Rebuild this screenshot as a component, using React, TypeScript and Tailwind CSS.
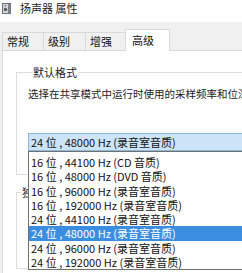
import React from "react";

const tabs = [
  { name: "常规", cls: "w-[42px] border-l border-r pl-[4px]" },
  { name: "级别", cls: "w-[42px] border-r pl-[4px]" },
  { name: "增强", cls: "w-[39px] pl-[4px]" },
];

const formats = [
  "16 位 , 44100 Hz (CD 音质)",
  "16 位 , 48000 Hz (DVD 音质)",
  "16 位 , 96000 Hz (录音室音质)",
  "16 位 , 192000 Hz (录音室音质)",
  "24 位 , 44100 Hz (录音室音质)",
  "24 位 , 48000 Hz (录音室音质)",
  "24 位 , 96000 Hz (录音室音质)",
  "24 位 , 192000 Hz (录音室音质)",
];

const selected = "24 位 , 48000 Hz (录音室音质)";

const SpeakerIcon = () => (
  <svg width="10" height="11" viewBox="0 0 10 11">
    <rect x="0.5" y="0.5" width="8" height="10" fill="#d3d6da" stroke="#6b7078" />
    <rect x="6" y="1" width="2.5" height="9" fill="#80858d" />
    <circle cx="3.5" cy="6.5" r="1.8" fill="#5d6168" />
    <circle cx="3.5" cy="2.8" r="0.8" fill="#5d6168" />
  </svg>
);

export default function App() {
  return (
    <div className="w-[242px] h-[273px] overflow-hidden bg-[#f0f0f0] flex flex-col font-['Noto_Sans_CJK_SC',sans-serif] text-[11px] text-[#111]">
      {/* title bar */}
      <div className="h-[22px] bg-white flex items-start pl-[2px] pt-[3px]">
        <SpeakerIcon />
        <span className="ml-[8px] -mt-[2px] leading-[14px] text-[#222]">扬声器 属性</span>
      </div>

      {/* tabs */}
      <div className="h-[28px] flex items-end pl-[2px]">
        {tabs.map((t) => (
          <div
            key={t.name}
            className={`h-[18px] border-t border-[#d9d9d9] leading-[17px] ${t.cls}`}
          >
            {t.name}
          </div>
        ))}
        <div className="relative z-10 -mb-px w-[45px] h-[22px] bg-white border-l border-r border-t border-[#d9d9d9] pl-[6px] leading-[20px]">
          高级
        </div>
      </div>

      {/* panel */}
      <div className="flex-1 ml-[2px] bg-white border-l border-t border-[#d9d9d9] pl-[13px] pt-[14px]">
        <fieldset className="w-[260px] border border-[#dcdcdc] pl-[11px] pb-[23px]">
          <legend className="ml-[4px] px-[1px] leading-[14px] text-[#1a1a1a]">默认格式</legend>
          <p className="mt-[8px] leading-[14px] text-[10.5px] whitespace-nowrap text-[#1a1a1a]">
            选择在共享模式中运行时使用的采样频率和位深度。
          </p>
          <div className="relative mt-[32px]">
            <div className="h-[18px] border border-[#8cb8e0] bg-[#cce4f7] pl-[2px] leading-[16px] whitespace-nowrap">
              {selected}
            </div>
            <ul className="absolute z-20 left-0 top-full w-[250px] border border-[#707070] bg-white pt-[3px]">
              {formats.map((f) => (
                <li
                  key={f}
                  className={`h-[14.3px] leading-[14.3px] pl-[2px] whitespace-nowrap ${
                    f === selected ? "bg-[#3b8edf] text-white" : ""
                  }`}
                >
                  {f}
                </li>
              ))}
            </ul>
          </div>
        </fieldset>

        <fieldset className="mt-[10px] w-[260px] h-[84px] border border-[#dcdcdc]">
          <legend className="ml-[4px] px-[1px] leading-[14px] text-[#1a1a1a]">独占模式</legend>
        </fieldset>
      </div>
    </div>
  );
}
